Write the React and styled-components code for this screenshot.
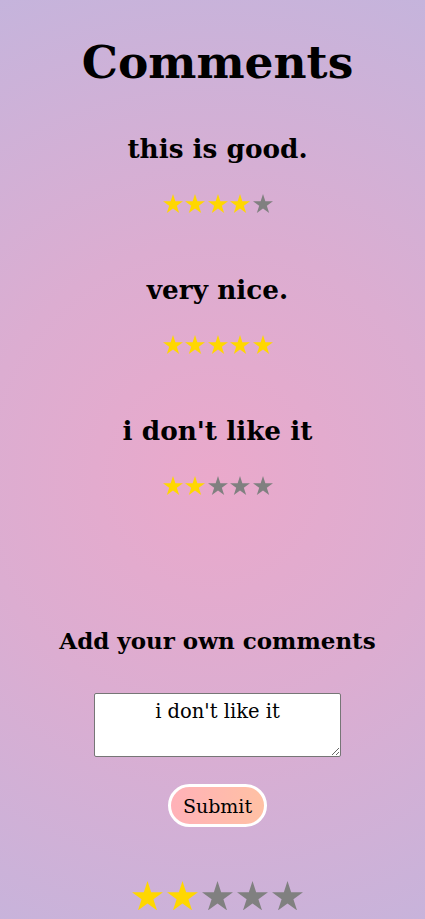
import React, { useState } from "react";
import styled, { createGlobalStyle } from "styled-components";

const GlobalStyle = createGlobalStyle`
  html, body {
    margin: 0;
    padding: 0;
  }
  body {
    font-family: "DejaVu Serif", "Liberation Serif", serif;
  }
`;

const Page = styled.div`
  min-height: 919px;
  box-sizing: border-box;
  padding: 32px 0 0 10px;
  display: flex;
  flex-direction: column;
  align-items: center;
  background: radial-gradient(circle farthest-corner at 50% 52%, #eaa9cb 0%, #dcadd1 45%, #c5b4dc 100%);
  color: #000;
`;

const Title = styled.h1`
  margin: 0;
  font-size: 45.5px;
  line-height: 60px;
  font-weight: bold;
`;

const CommentList = styled.div`
  display: flex;
  flex-direction: column;
  align-items: center;
  margin-top: 39px;
  gap: 59px;
`;

const Comment = styled.div`
  display: flex;
  flex-direction: column;
  align-items: center;
  gap: 27px;
`;

const CommentText = styled.h2`
  margin: 0;
  font-size: 26.3px;
  line-height: 36px;
  font-weight: bold;
`;

const Stars = styled.div`
  display: flex;
  align-items: center;
  gap: ${props => props.$gap}px;
`;

const StarIcon = styled.svg`
  display: block;
  width: ${props => props.$size}px;
  height: ${props => props.$size * 0.95}px;
  fill: ${props => (props.$on ? "#ffd700" : "#808080")};
`;

const Star = ({ on, size }) => (
  <StarIcon $on={on} $size={size} viewBox="2.45 0 95.1 90.45">
    <polygon points="50,0 61.23,34.55 97.55,34.55 68.17,55.9 79.39,90.45 50,69.1 20.61,90.45 31.83,55.9 2.45,34.55 38.77,34.55" />
  </StarIcon>
);

const Rating = ({ value, size, gap }) => (
  <Stars $gap={gap}>
    {[1, 2, 3, 4, 5].map(n => (
      <Star key={n} on={n <= value} size={size} />
    ))}
  </Stars>
);

const AddTitle = styled.h3`
  margin: 130px 0 0;
  font-size: 23px;
  line-height: 32px;
  font-weight: bold;
`;

const TextBox = styled.textarea`
  margin-top: 36px;
  width: 247px;
  height: 64px;
  box-sizing: border-box;
  padding: 6px 6px 4px;
  border: 1px solid #767676;
  border-radius: 2px;
  background: #fff;
  font-family: "DejaVu Serif", "Liberation Serif", serif;
  font-size: 19.5px;
  line-height: 24px;
  text-align: center;
  color: #000;
`;

const SubmitButton = styled.button`
  margin-top: 27px;
  width: 99px;
  height: 43px;
  box-sizing: border-box;
  border: 3px solid #fff;
  border-radius: 22px;
  background: linear-gradient(90deg, #ffb1b8, #ffc1a4);
  font-family: "DejaVu Serif", "Liberation Serif", serif;
  font-size: 19px;
  color: #000;
  cursor: pointer;
  padding: 0;
`;

const BigRating = styled.div`
  margin-top: 54px;
`;

const comments = [
  { text: "this is good.", rating: 4 },
  { text: "very nice.", rating: 5 },
  { text: "i don't like it", rating: 2 },
];

const App = () => {
  const [draft, setDraft] = useState("i don't like it");

  return (
    <Page>
      <GlobalStyle />
      <Title>Comments</Title>
      <CommentList>
        {comments.map(c => (
          <Comment key={c.text}>
            <CommentText>{c.text}</CommentText>
            <Rating value={c.rating} size={20} gap={2.5} />
          </Comment>
        ))}
      </CommentList>
      <AddTitle>Add your own comments</AddTitle>
      <TextBox value={draft} onChange={e => setDraft(e.target.value)} spellCheck={false} />
      <SubmitButton type="button">Submit</SubmitButton>
      <BigRating>
        <Rating value={2} size={31} gap={4} />
      </BigRating>
    </Page>
  );
};

export default App;
